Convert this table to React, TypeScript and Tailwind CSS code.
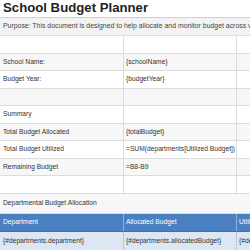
import React from "react";

type Row = { a: string; b: string; bg: string };

const rows: Row[] = [
  { a: "", b: "", bg: "bg-white" },
  { a: "School Name:", b: "{schoolName}", bg: "bg-[#f7f7f7]" },
  { a: "Budget Year:", b: "{budgetYear}", bg: "bg-white" },
  { a: "", b: "", bg: "bg-[#f7f7f7]" },
  { a: "Summary", b: "", bg: "bg-white" },
  { a: "Total Budget Allocated", b: "{totalBudget}", bg: "bg-[#f7f7f7]" },
  { a: "Total Budget Utilized", b: "=SUM(departments[Utilized Budget])", bg: "bg-white" },
  { a: "Remaining Budget", b: "=B8-B9", bg: "bg-[#f7f7f7]" },
  { a: "", b: "", bg: "bg-white" },
];

export default function App() {
  return (
    <div
      className="w-[250px] h-[250px] overflow-hidden bg-white text-[#333] text-[6.7px]"
      style={{ fontFamily: '"Liberation Sans", Arial, sans-serif' }}
    >
      <div className="w-[400px]">
        <div className="h-[17.5px] flex items-center pl-[3px] border-b border-[#d0d0d0] text-[13.2px] font-bold text-[#222]">
          School Budget Planner
        </div>
        <div className="h-[18.5px] flex items-center pl-[3px] bg-[#f3f3f3] border-b border-[#dcdcdc] whitespace-nowrap text-[6.9px] text-[#444]">
          Purpose: This document is designed to help allocate and monitor budget across various departments within the school.
        </div>
        {rows.map((r, i) => (
          <div key={i} className={`h-[17.5px] flex border-b border-[#dcdcdc] ${r.bg}`}>
            <div className="w-[124px] shrink-0 border-r border-[#dcdcdc] flex items-center pl-[3px] whitespace-nowrap">
              {r.a}
            </div>
            <div className="w-[113px] shrink-0 border-r border-[#dcdcdc] flex items-center pl-[2px] whitespace-nowrap">
              {r.b}
            </div>
            <div className="w-[113px] shrink-0" />
          </div>
        ))}
        <div className="h-[20.5px] flex items-center pl-[3px] bg-[#f7f7f7] border-b border-[#dcdcdc] whitespace-nowrap">
          Departmental Budget Allocation
        </div>
        <div className="h-[18px] flex bg-[#4a7fc1] text-white border-b border-[#3f6fae]">
          <div className="w-[124px] shrink-0 border-r border-[#8fb0da] flex items-center pl-[3px] whitespace-nowrap">
            Department
          </div>
          <div className="w-[113px] shrink-0 border-r border-[#8fb0da] flex items-center pl-[2px] whitespace-nowrap">
            Allocated Budget
          </div>
          <div className="w-[113px] shrink-0 flex items-center pl-[2px] whitespace-nowrap">
            Utilized Budget
          </div>
        </div>
        <div className="h-[18px] flex bg-[#dde7f3]">
          <div className="w-[124px] shrink-0 border-r border-[#b9c9de] flex items-center pl-[3px] whitespace-nowrap">
            {"{#departments.department}"}
          </div>
          <div className="w-[113px] shrink-0 border-r border-[#b9c9de] flex items-center pl-[2px] whitespace-nowrap">
            {"{#departments.allocatedBudget}"}
          </div>
          <div className="w-[113px] shrink-0 flex items-center pl-[2px] whitespace-nowrap">
            {"{#departments.utilizedBudget}"}
          </div>
        </div>
      </div>
    </div>
  );
}
